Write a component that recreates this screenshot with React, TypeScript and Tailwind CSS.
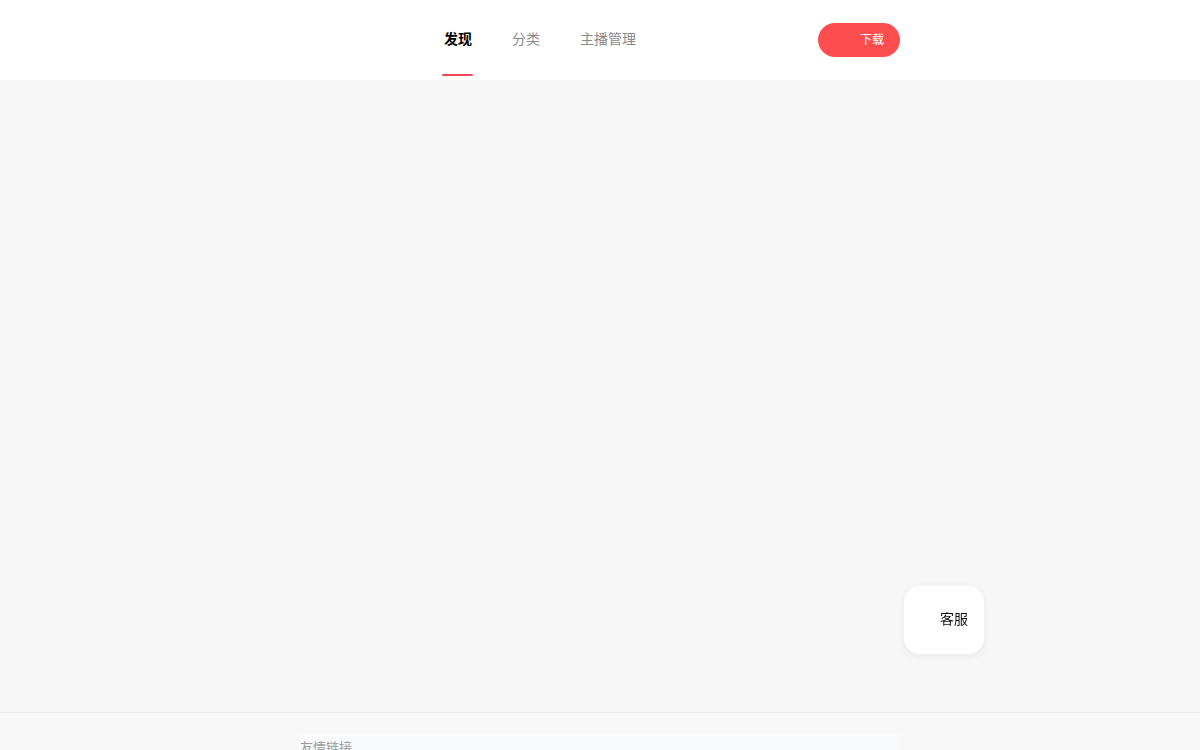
import React from 'react'

const NAV = [
  { label: '发现', active: true },
  { label: '分类', active: false },
  { label: '主播管理', active: false },
]

export default function App() {
  return (
    <div className="min-h-screen flex flex-col bg-[#f7f7f7] font-['Noto_Sans_CJK_SC','Noto_Sans',sans-serif]">
      {/* Header */}
      <header className="h-20 bg-white flex-shrink-0">
        <div className="w-[600px] mx-auto h-full flex items-center">
          <div className="w-[144px] h-full" />
          <nav className="flex items-stretch h-full gap-[40px]">
            {NAV.map((n) => (
              <div key={n.label} className="relative flex items-center h-full pb-[4px]">
                <span className={n.active ? 'text-[14px] font-bold text-black' : 'text-[14px] text-[#8a8a8a]'}>
                  {n.label}
                </span>
                {n.active && <div className="absolute left-[-2px] right-[-1px] bottom-[4px] h-[2px] rounded-full bg-[#f04a55]" />}
              </div>
            ))}
          </nav>
          <div className="flex-1" />
          <button className="w-[82px] h-[34px] rounded-full bg-[#fe4d4f] flex items-center justify-end pr-[16px] pb-[2px] text-[12px] text-white">
            下载
          </button>
        </div>
      </header>

      {/* Main */}
      <main className="h-[632px] flex-shrink-0" />

      {/* Footer */}
      <footer className="border-t border-[#ececec] bg-[#f8f8f8] pt-[21px]">
        <div className="w-[600px] mx-auto bg-[#f9fafc] h-[200px]">
          <div className="pt-[6px] text-[13px] text-[#999] leading-none">友情链接</div>
        </div>
      </footer>

      {/* Floating service */}
      <div className="fixed right-[216px] bottom-[96px] w-[80px] h-[68px] rounded-[16px] bg-white shadow-[0_2px_8px_rgba(0,0,0,0.06)] flex items-center justify-end pr-[16px] pb-[4px]">
        <span className="text-[14px] text-[#111]">客服</span>
      </div>
    </div>
  )
}
